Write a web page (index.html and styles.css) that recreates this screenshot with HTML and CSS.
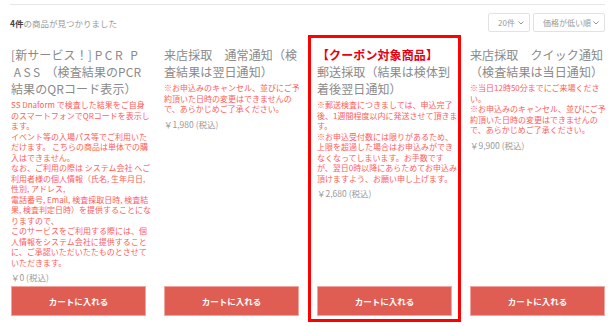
FILE: index.html
```html
<!DOCTYPE html>
<html lang="ja">
<head>
<meta charset="utf-8">
<link rel="stylesheet" href="styles.css">
</head>
<body>
<div class="page">
  <div class="rule"></div>
  <div class="toolbar">
    <div class="count"><b>4件</b>の商品が見つかりました</div>
    <div class="selects">
      <div class="sel sel-num"><span>20件</span><svg class="chev" viewBox="0 0 6 4" width="6" height="4"><path d="M0.5 0.5 L3 3 L5.5 0.5" fill="none" stroke="#888" stroke-width="0.9"/></svg></div>
      <div class="sel sel-sort"><span>価格が低い順</span><svg class="chev" viewBox="0 0 6 4" width="6" height="4"><path d="M0.5 0.5 L3 3 L5.5 0.5" fill="none" stroke="#888" stroke-width="0.9"/></svg></div>
    </div>
  </div>
  <div class="grid">
    <div class="item">
      <div class="title">[新サービス！] <span class="wide">PCR P</span><br>&nbsp;<span class="wide">ASS</span> （検査結果のPCR<br>結果のQRコード表示）</div>
      <div class="desc">SS Dnaform で検査した結果をご自身<br>のスマートフォンでQRコードを表示し<br>ます。<br>イベント等の入場パス等でご利用いた<br>だけます。 こちらの商品は単体での購<br>入はできません。<br>なお、ご利用の際は システム会社 へご<br>利用者様の個人情報（氏名, 生年月日,<br>性別, アドレス,<br>電話番号, Email, 検査採取日時, 検査結<br>果, 検査判定日時）を提供することにな<br>りますので、<br>このサービスをご利用する際には、個<br>人情報をシステム会社に提供すること<br>に、ご承認いただいたたものとさせて<br>いただきます。</div>
      <div class="price">￥0 (税込)</div>
      <div class="btn">カートに入れる</div>
    </div>
    <div class="item">
      <div class="title">来店採取　通常通知（検<br>査結果は翌日通知）</div>
      <div class="desc">※お申込みのキャンセル、並びにご予<br>約頂いた日時の変更はできませんの<br>で、あらかじめご了承ください。</div>
      <div class="price">￥1,980 (税込)</div>
      <div class="btn">カートに入れる</div>
    </div>
    <div class="item item-coupon">
      <div class="title"><span class="coupon">【クーポン対象商品】</span><br>郵送採取（結果は検体到<br>着後翌日通知）</div>
      <div class="desc">※郵送検査につきましては、申込完了<br>後、1週間程度以内に発送させて頂きま<br>す。<br>※お申込受付数には限りがあるため、<br>上限を超過した場合はお申込みができ<br>なくなってしまいます。お手数です<br>が、翌日0時以降にあらためてお申込み<br>頂けますよう、お願い申し上げます。</div>
      <div class="price">￥2,680 (税込)</div>
      <div class="btn">カートに入れる</div>
    </div>
    <div class="item">
      <div class="title">来店採取　クイック通知<br>（検査結果は当日通知）</div>
      <div class="desc">※当日12時50分までにご来場くださ<br>い。<br>※お申込みのキャンセル、並びにご予<br>約頂いた日時の変更はできませんの<br>で、あらかじめご了承ください。</div>
      <div class="price">￥9,900 (税込)</div>
      <div class="btn">カートに入れる</div>
    </div>
  </div>
</div>
</body>
</html>
```

FILE: styles.css
```css
* { box-sizing: border-box; }
html, body { margin: 0; padding: 0; background: #fff; }
body {
  font-family: "Noto Sans CJK JP", "Noto Sans", sans-serif;
  color: #888;
  width: 616px;
  height: 326px;
  overflow: hidden;
}
.page { padding-top: 4px; }
.rule {
  margin: 0 11px 0 10px;
  border-top: 1px solid #e6e6e6;
}
.toolbar {
  display: flex;
  justify-content: space-between;
  align-items: center;
  margin: 8px 11px 0 10px;
  height: 19px;
}
.count {
  font-size: 8.5px;
  color: #999;
  line-height: 12px;
}
.count b { color: #444; font-weight: bold; }
.selects { display: flex; gap: 3px; }
.sel {
  display: flex;
  align-items: center;
  justify-content: space-between;
  height: 19px;
  border: 1px solid #e2e2e2;
  border-radius: 2px;
  font-size: 8px;
  color: #999;
  padding: 0 5px 0 9px;
  background: #fff;
}
.sel-num { width: 42px; }
.sel-sort { width: 72px; padding-left: 9px; }
.chev { display: block; flex: none; }
.grid {
  display: grid;
  grid-template-columns: repeat(4, 153px);
  margin: 3px 0 0 2px;
  height: 287px;
}
.item {
  display: flex;
  flex-direction: column;
  border: 3px solid transparent;
  padding: 8px 6px 3px;
  min-width: 0;
}
.item-coupon { border-color: #ff0000; }
.title {
  font-size: 12px;
  line-height: 17px;
  color: #8a8a8a;
  white-space: nowrap;
  letter-spacing: 0.1px;
}
.wide { letter-spacing: 2.5px; }
.coupon { color: #e60012; font-weight: bold; }
.desc {
  margin-top: 3px;
  font-size: 8px;
  line-height: 10.5px;
  color: #ff5c5c;
  white-space: nowrap;
}
.price {
  margin-top: 2px;
  font-size: 8.5px;
  line-height: 14px;
  color: #999;
}
.btn {
  margin-top: auto;
  height: 30px;
  background: #df5d52;
  border: 1px solid #f2a59e;
  color: #fff;
  font-weight: bold;
  font-size: 8.5px;
  display: flex;
  align-items: center;
  justify-content: center;
}
```
